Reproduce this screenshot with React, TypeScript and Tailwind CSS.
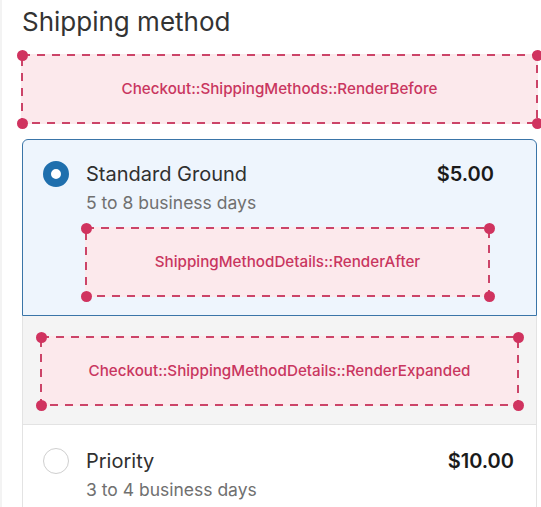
import React from "react";

type ExtensionProps = {
  label: string;
  className?: string;
};

const Dot = ({ className }: { className: string }) => (
  <span
    className={`absolute h-[11px] w-[11px] rounded-full bg-[#d0335f] ${className}`}
  />
);

// dashed placeholder that marks an extension target
const Extension = ({ label, className = "" }: ExtensionProps) => (
  <div
    className={`relative flex h-[70px] items-center justify-center bg-[#fce9ec] ${className}`}
  >
    <svg className="absolute inset-px h-[calc(100%-2px)] w-[calc(100%-2px)] overflow-visible">
      <rect
        x="0"
        y="0"
        width="100%"
        height="100%"
        fill="none"
        stroke="#cc4468"
        strokeWidth="2"
        strokeDasharray="8 7"
      />
    </svg>
    <span className="relative text-[15.2px] font-medium text-[#c9365f]">{label}</span>
    <Dot className="left-[-4.5px] top-[-4.5px]" />
    <Dot className="right-[-4.5px] top-[-4.5px]" />
    <Dot className="bottom-[-4.5px] left-[-4.5px]" />
    <Dot className="bottom-[-4.5px] right-[-4.5px]" />
  </div>
);

const Radio = ({ checked }: { checked: boolean }) =>
  checked ? (
    <span className="h-[26px] w-[26px] shrink-0 rounded-full border-[8px] border-[#1f6fad] bg-white" />
  ) : (
    <span className="h-[26px] w-[26px] shrink-0 rounded-full border-[1.5px] border-[#cfcfcf] bg-white" />
  );

export default function App() {
  return (
    <div className="h-[507px] w-[541px] overflow-hidden border-l-2 border-[#f3f3f3] bg-white font-['Inter',sans-serif]">
      <div className="ml-[19px] w-[517px]">
        <h2 className="pl-px pt-[6px] text-[26px] leading-[32px] text-[#333333]">
          Shipping method
        </h2>

        <Extension
          className="mt-4"
          label="Checkout::ShippingMethods::RenderBefore"
        />

        <div className="mx-px mt-[15px]">
          {/* selected option */}
          <div className="flex gap-[17px] rounded-t-[6px] border border-[#3a75a8] bg-[#eef5fd] pb-[18px] pl-[20px] pr-[42px] pt-[21px]">
            <Radio checked />
            <div className="flex-1">
              <div className="flex items-center justify-between leading-[26px]">
                <span className="text-[20px] text-[#303030]">Standard Ground</span>
                <span className="text-[20px] font-semibold text-[#1a1a1a]">$5.00</span>
              </div>
              <div className="mt-[4px] text-[17.5px] leading-6 text-[#707070]">
                5 to 8 business days
              </div>
              <Extension
                className="-ml-px mt-[12px] w-[405px]"
                label="ShippingMethodDetails::RenderAfter"
              />
            </div>
          </div>

          {/* expanded area */}
          <div className="border-x border-b border-[#e3e3e3] bg-[#f4f4f4] px-[17px] pb-[18px] pt-[20px]">
            <Extension label="Checkout::ShippingMethodDetails::RenderExpanded" />
          </div>

          {/* second option */}
          <div className="flex h-[100px] gap-[17px] border-x border-[#e3e3e3] bg-white pl-[20px] pr-[22px] pt-[23px]">
            <Radio checked={false} />
            <div className="flex-1">
              <div className="flex items-center justify-between leading-[26px]">
                <span className="text-[20px] text-[#303030]">Priority</span>
                <span className="text-[20px] font-semibold text-[#1a1a1a]">$10.00</span>
              </div>
              <div className="mt-[4px] text-[17.5px] leading-6 text-[#707070]">
                3 to 4 business days
              </div>
            </div>
          </div>
        </div>
      </div>
    </div>
  );
}
